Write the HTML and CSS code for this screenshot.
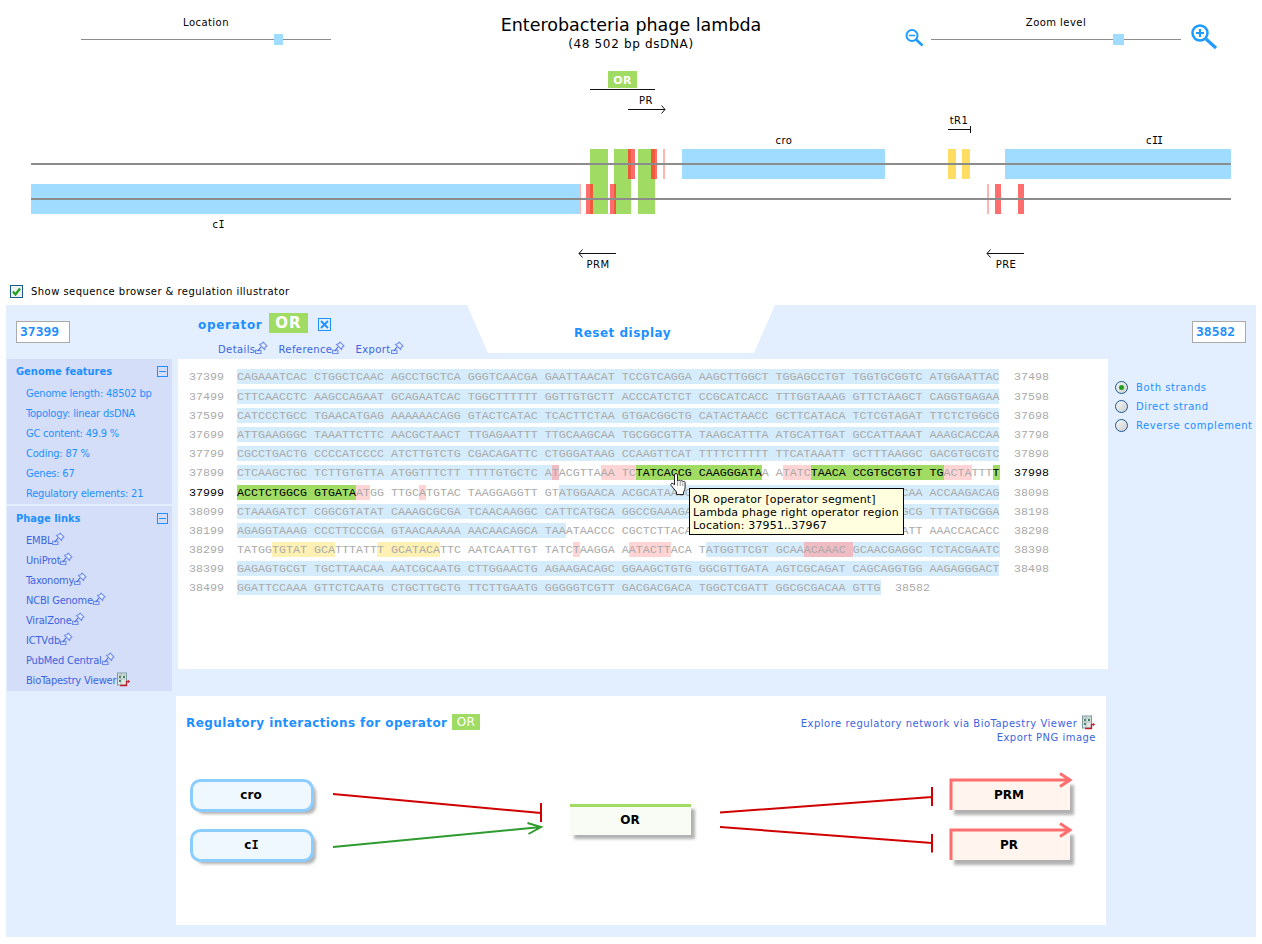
FILE: index.html
```html
<!DOCTYPE html>
<html lang="en">
<head>
<meta charset="utf-8">
<title>Enterobacteria phage lambda</title>
<link rel="stylesheet" href="styles.css">
</head>
<body>
<svg class="defs" width="0" height="0" aria-hidden="true">
  <symbol id="pin" viewBox="0 0 12 12">
    <path d="M7.500 1 11 4.500 9.600 5.500 8.800 7.800 4.200 3.200 6.500 2.400Z" fill="#e8eeff" stroke="#6f8ce8" stroke-width="1"/>
    <path d="M.5 8.500h5v3h-5z" fill="none" stroke="#6f8ce8" stroke-width="1"/>
    <path d="M5.500 5.500 2.500 9.500" stroke="#3c64e0" stroke-width="1"/>
  </symbol>
  <symbol id="bio" viewBox="0 0 15 15">
    <rect x="1.500" y="1" width="9" height="12" fill="#dfe8e4" stroke="#7d9aa0"/>
    <path d="M3 4h2v2H3zM7 4h2v2H7zM3 8h2v2H3z" fill="#3f7f5f"/>
    <path d="M2 3h8M2 7h8M5 1v11" stroke="#93a6a8" stroke-width=".6"/>
    <path d="M4 13.500h6.500V9.500h3" fill="none" stroke="#c0202c" stroke-width="1.400"/>
    <path d="M12 8l2 1.500-2 1.500z" fill="#c0202c"/>
  </symbol>
</svg>

<header class="top">
  <div class="top-left">
    <div class="slider">
      <div class="slider-label">Location</div>
      <div class="track"><span class="thumb thumb-loc"></span></div>
    </div>
  </div>
  <div class="title-block">
    <h1 class="title">Enterobacteria phage lambda</h1>
    <div class="subtitle">(48 502 bp dsDNA)</div>
  </div>
  <div class="top-right">
    <svg class="zoom-minus" width="20" height="20" viewBox="0 0 20 20"><circle cx="8" cy="7.500" r="5.500" fill="none" stroke="#1e9bff" stroke-width="2"/><path d="M5 7.500h6" stroke="#1e9bff" stroke-width="1.500"/><path d="M12 11.500 18.500 17.500" stroke="#1e9bff" stroke-width="2.600"/></svg>
    <div class="slider">
      <div class="slider-label">Zoom level</div>
      <div class="track"><span class="thumb thumb-zoom"></span></div>
    </div>
    <svg class="zoom-plus" width="26" height="26" viewBox="0 0 26 26"><circle cx="9" cy="9" r="7.500" fill="none" stroke="#1e9bff" stroke-width="2.500"/><path d="M5 9h8M9 5v8" stroke="#1e9bff" stroke-width="2.200"/><path d="M15 15 25 24" stroke="#1e9bff" stroke-width="3.200"/></svg>
  </div>
</header>

<svg class="map" width="1262" height="208" viewBox="0 70 1262 208">
  <rect class="coding" x="31" y="184" width="549" height="30"/>
  <rect class="coding" x="682" y="149" width="203" height="30"/>
  <rect class="coding" x="1005" y="149" width="226" height="30"/>
  <rect class="op" x="590" y="149" width="18" height="65"/>
  <rect class="op" x="614" y="149" width="17" height="65"/>
  <rect class="op" x="638" y="149" width="17" height="65"/>
  <rect class="term" x="948" y="149" width="8" height="30"/>
  <rect class="term" x="962" y="149" width="8" height="30"/>
  <rect class="red" x="631" y="149" width="4" height="30"/>
  <rect class="red-dark" x="628" y="149" width="3" height="30"/>
  <rect class="red-dark" x="651" y="149" width="4" height="30"/>
  <rect class="red" x="655" y="149" width="2" height="30"/>
  <rect class="red-pale" x="663" y="149" width="2" height="30"/>
  <rect class="red-pale" x="580" y="184" width="1" height="30"/>
  <rect class="red" x="586" y="184" width="4" height="30"/>
  <rect class="red-dark" x="590" y="184" width="3" height="30"/>
  <rect class="red" x="610" y="184" width="4" height="30"/>
  <rect class="red-dark" x="614" y="184" width="2" height="30"/>
  <rect class="red-pale" x="987" y="184" width="2" height="30"/>
  <rect class="red" x="995" y="184" width="6" height="30"/>
  <rect class="red" x="1018" y="184" width="6" height="30"/>
  <rect class="strand" x="31" y="163" width="1200" height="2"/>
  <rect class="strand" x="31" y="198" width="1200" height="2"/>
  <rect class="op" x="608" y="71" width="29" height="17"/>
  <text class="map-badge" x="622.500" y="84">OR</text>
  <path class="ink" d="M590 89.500h65M628 109.500h37M661.500 105.500l3.500 4-3.500 4M948 129.500h22M970.500 126v7M579 253.500h37M582.500 249.500l-3.500 4 3.500 4M987 253.500h37M990.500 249.500l-3.500 4 3.500 4"/>
  <text class="map-label" x="646" y="104">PR</text>
  <text class="map-label" x="784" y="144">cro</text>
  <text class="map-label" x="959" y="124">tR1</text>
  <text class="map-label" x="1154" y="144">c<tspan class="serif-i">II</tspan></text>
  <text class="map-label" x="218" y="228">c<tspan class="serif-i">I</tspan></text>
  <text class="map-label" x="598" y="268">PRM</text>
  <text class="map-label" x="1006" y="268">PRE</text>
</svg>

<label class="show-row">
  <span class="check"><svg width="9" height="9" viewBox="0 0 9 9"><path d="M1 4.500 3.500 7.500 8 1.500" fill="none" stroke="#1fa01f" stroke-width="2.200"/></svg></span>
  <span class="show-text">Show sequence browser &amp; regulation illustrator</span>
</label>

<main class="main">
  <div class="main-head">
    <div class="head-left"><div class="pos-box">37399</div></div>
    <div class="head-info">
      <div class="op-line">
        <span class="op-name">operator</span>
        <span class="op-badge">OR</span>
        <span class="close-box"><svg width="9" height="9" viewBox="0 0 9 9"><path d="M1 1l7 7M8 1 1 8" stroke="#1e90ff" stroke-width="1.800"/></svg></span>
      </div>
      <div class="op-links">
        <a class="link">Details<svg class="pin"><use href="#pin"/></svg></a>
        <a class="link">Reference<svg class="pin"><use href="#pin"/></svg></a>
        <a class="link">Export<svg class="pin"><use href="#pin"/></svg></a>
      </div>
    </div>
    <div class="reset-tab">Reset display</div>
    <div class="head-right"><div class="pos-box">38582</div></div>
  </div>

  <div class="main-body">
    <aside class="side">
      <section class="side-box">
        <div class="side-head"><span>Genome features</span><span class="minus"></span></div>
        <div class="side-item">Genome length: 48502 bp</div>
        <div class="side-item">Topology: linear dsDNA</div>
        <div class="side-item">GC content: 49.9 %</div>
        <div class="side-item">Coding: 87 %</div>
        <div class="side-item">Genes: 67</div>
        <div class="side-item">Regulatory elements: 21</div>
      </section>
      <section class="side-box">
        <div class="side-head"><span>Phage links</span><span class="minus"></span></div>
        <div class="side-item is-link">EMBL<svg class="pin"><use href="#pin"/></svg></div>
        <div class="side-item is-link">UniProt<svg class="pin"><use href="#pin"/></svg></div>
        <div class="side-item is-link">Taxonomy<svg class="pin"><use href="#pin"/></svg></div>
        <div class="side-item is-link">NCBI Genome<svg class="pin"><use href="#pin"/></svg></div>
        <div class="side-item is-link">ViralZone<svg class="pin"><use href="#pin"/></svg></div>
        <div class="side-item is-link">ICTVdb<svg class="pin"><use href="#pin"/></svg></div>
        <div class="side-item is-link">PubMed Central<svg class="pin"><use href="#pin"/></svg></div>
        <div class="side-item is-link">BioTapestry Viewer<svg class="bio"><use href="#bio"/></svg></div>
      </section>
    </aside>

    <div class="center">
      <section class="seq-panel">
        <div class="row"><span class="num">37399</span><span class="seq"><span class="b">CAGAAATCAC CTGGCTCAAC AGCCTGCTCA GGGTCAACGA GAATTAACAT TCCGTCAGGA AAGCTTGGCT TGGAGCCTGT TGGTGCGGTC ATGGAATTAC</span></span><span class="num">37498</span></div>
        <div class="row"><span class="num">37499</span><span class="seq"><span class="b">CTTCAACCTC AAGCCAGAAT GCAGAATCAC TGGCTTTTTT GGTTGTGCTT ACCCATCTCT CCGCATCACC TTTGGTAAAG GTTCTAAGCT CAGGTGAGAA</span></span><span class="num">37598</span></div>
        <div class="row"><span class="num">37599</span><span class="seq"><span class="b">CATCCCTGCC TGAACATGAG AAAAAACAGG GTACTCATAC TCACTTCTAA GTGACGGCTG CATACTAACC GCTTCATACA TCTCGTAGAT TTCTCTGGCG</span></span><span class="num">37698</span></div>
        <div class="row"><span class="num">37699</span><span class="seq"><span class="b">ATTGAAGGGC TAAATTCTTC AACGCTAACT TTGAGAATTT TTGCAAGCAA TGCGGCGTTA TAAGCATTTA ATGCATTGAT GCCATTAAAT AAAGCACCAA</span></span><span class="num">37798</span></div>
        <div class="row"><span class="num">37799</span><span class="seq"><span class="b">CGCCTGACTG CCCCATCCCC ATCTTGTCTG CGACAGATTC CTGGGATAAG CCAAGTTCAT TTTTCTTTTT TTCATAAATT GCTTTAAGGC GACGTGCGTC</span></span><span class="num">37898</span></div>
        <div class="row"><span class="num">37899</span><span class="seq"><span class="b">CTCAAGCTGC TCTTGTGTTA ATGGTTTCTT TTTTGTGCTC A</span><span class="pb">T</span><span>ACGTTA</span><span class="p">AA TC</span><span class="g">TATCACCG CAAGGGATA</span><span>A A</span><span class="p">TATC</span><span class="g">TAACA CCGTGCGTGT TG</span><span class="p">ACTA</span><span>TTT</span><span class="g">T</span></span><span class="num is-active">37998</span></div>
        <div class="row"><span class="num is-active">37999</span><span class="seq"><span class="g">ACCTCTGGCG GTGATA</span><span class="p">AT</span><span>GG TTGC</span><span class="p">A</span><span>TGTAC TAAGGAGGTT GT</span><span class="b">ATGGAACA ACGCATAACC CTGAAAGATT ATGCAATGCG CTTTGGGCAA ACCAAGACAG</span></span><span class="num">38098</span></div>
        <div class="row"><span class="num">38099</span><span class="seq"><span class="b">CTAAAGATCT CGGCGTATAT CAAAGCGCGA TCAACAAGGC CATTCATGCA GGCCGAAAGA TTTTTTTAAC TATAAACGCT GATGGAAGCG TTTATGCGGA</span></span><span class="num">38198</span></div>
        <div class="row"><span class="num">38199</span><span class="seq"><span class="b">AGAGGTAAAG CCCTTCCCGA GTAACAAAAA AACAACAGCA TAA</span><span>ATAACCC CGCTCTTACA CATTCCAGCC CTGAAAAAGG GCATCAAATT AAACCACACC</span></span><span class="num">38298</span></div>
        <div class="row"><span class="num">38299</span><span class="seq"><span>TATGG</span><span class="y">TGTAT GCA</span><span>TTTATT</span><span class="y">T GCATACA</span><span>TTC AATCAATTGT TATC</span><span class="p">T</span><span>AAGGA A</span><span class="p">ATACTT</span><span>ACA T</span><span class="b">ATGGTTCGT GCAA</span><span class="pb">ACAAAC </span><span class="b">GCAACGAGGC TCTACGAATC</span></span><span class="num">38398</span></div>
        <div class="row"><span class="num">38399</span><span class="seq"><span class="b">GAGAGTGCGT TGCTTAACAA AATCGCAATG CTTGGAACTG AGAAGACAGC GGAAGCTGTG GGCGTTGATA AGTCGCAGAT CAGCAGGTGG AAGAGGGACT</span></span><span class="num">38498</span></div>
        <div class="row"><span class="num">38499</span><span class="seq"><span class="b">GGATTCCAAA GTTCTCAATG CTGCTTGCTG TTCTTGAATG GGGGGTCGTT GACGACGACA TGGCTCGATT GGCGCGACAA GTTG</span></span><span class="num num-end">38582</span></div>

        <svg class="hand" width="16" height="22" viewBox="0 0 16 22"><path d="M4.500 2a1.500 1.500 0 0 1 3 0V8h.8a1.300 1.300 0 0 1 2.400.3 1.300 1.300 0 0 1 2.400.4 1.200 1.200 0 0 1 2 .8V14q0 3-1.500 5v2.500H6.500V19L1.200 12.500q-1-1.500.5-2.200 1-.3 2.800 1.500Z" fill="#fff" stroke="#222"/><path d="M7.500 9v4M10.200 9v4M12.800 9.500V13" stroke="#999"/></svg>
        <div class="tooltip">OR operator [operator segment]<br>Lambda phage right operator region<br>Location: 37951..37967</div>
      </section>

      <section class="reg-panel">
        <div class="reg-head">
          <h2 class="reg-title">Regulatory interactions for operator <span class="reg-badge">OR</span></h2>
          <div class="reg-links">
            <a class="link">Explore regulatory network via BioTapestry Viewer <svg class="bio"><use href="#bio"/></svg></a>
            <a class="link">Export PNG image</a>
          </div>
        </div>
        <svg class="diagram" width="930" height="180" viewBox="176 745 930 180">
          <defs><filter id="soft" x="-10%" y="-20%" width="120%" height="140%"><feGaussianBlur stdDeviation="1.500"/></filter></defs>
          <rect class="shadow" x="196" y="785" width="120" height="29" rx="8"/>
          <rect class="shadow" x="196" y="835" width="120" height="29" rx="8"/>
          <rect class="shadow" x="574" y="809" width="121" height="30"/>
          <rect class="shadow" x="954" y="785" width="120" height="30"/>
          <rect class="shadow" x="954" y="835" width="120" height="30"/>
          <rect class="prot" x="191.500" y="780.500" width="121" height="30" rx="9"/>
          <rect class="prot" x="191.500" y="830.500" width="121" height="30" rx="9"/>
          <rect class="op-node" x="570" y="805" width="121" height="30"/>
          <rect class="op-top" x="570" y="804" width="121" height="3"/>
          <rect class="prom" x="950" y="780" width="120" height="30"/>
          <rect class="prom" x="950" y="830" width="120" height="30"/>
          <path class="prom-line" d="M951 810V780H1070M1060 773.500l10 6.500-10 6.500"/>
          <path class="prom-line" d="M951 860V830H1070M1060 823.500l10 6.500-10 6.500"/>
          <path class="repress" d="M333 794 541 813M541 803v19M720 812.500 932 797M932 787v19M720 827 932 843M932 834v18.500"/>
          <path class="activate" d="M333 847 541 827M527.500 823 541 827 528.500 834"/>
          <text class="node-label" x="251" y="799">cro</text>
          <text class="node-label" x="251" y="849">c<tspan class="serif-i">I</tspan></text>
          <text class="node-label" x="630" y="824">OR</text>
          <text class="node-label" x="1009" y="799">PRM</text>
          <text class="node-label" x="1009" y="849">PR</text>
        </svg>
      </section>
    </div>

    <div class="opts">
      <div class="opt"><span class="radio is-on"></span>Both strands</div>
      <div class="opt"><span class="radio"></span>Direct strand</div>
      <div class="opt"><span class="radio"></span>Reverse complement</div>
    </div>
  </div>
</main>
</body>
</html>
```

FILE: styles.css
```css
* { box-sizing: border-box; }
html, body { margin: 0; padding: 0; }
body {
  width: 1262px;
  height: 944px;
  overflow: hidden;
  background: #fff;
  color: #000;
  font-family: "DejaVu Sans", Verdana, sans-serif;
  font-size: 10px;
  letter-spacing: .45px;
}
.defs { position: absolute; }

/* top bar */
.top { display: grid; grid-template-columns: 1fr auto 1fr; height: 70px; }
.top-left { padding-left: 81px; padding-top: 16px; }
.top-right { display: flex; justify-content: flex-end; align-items: flex-start; padding: 16px 45px 0 0; }
.slider { width: 250px; }
.slider-label { text-align: center; line-height: 13px; height: 23px; }
.track { position: relative; height: 1px; background: #8c8c8c; }
.thumb { position: absolute; top: -5px; width: 9px; height: 11px; background: #a0dcff; }
.thumb-loc { left: 193px; }
.thumb-zoom { left: 182px; width: 11px; }
.zoom-minus { margin: 12px 7px 0 0; }
.zoom-plus { margin: 8px 0 0 10px; }
.title-block { text-align: center; padding-top: 15px; }
.title { margin: 0; font-size: 17.5px; font-weight: 400; line-height: 21px; letter-spacing: 0; }
.subtitle { font-size: 12px; line-height: 17px; letter-spacing: .65px; }

/* genome map */
.map { display: block; }
.coding { fill: #a0dcff; }
.op { fill: #a0dc64; }
.term { fill: #ffdc64; }
.red { fill: #ff6e6e; }
.red-dark { fill: #ee5a3c; }
.red-pale { fill: #ffb4b4; }
.strand { fill: #8c8c8c; }
.ink { fill: none; stroke: #111; stroke-width: 1; }
.map-label { font-size: 10px; text-anchor: middle; }
.map-badge { font-size: 11px; font-weight: 700; fill: #fff; text-anchor: middle; }
.serif-i { font-family: "DejaVu Sans Mono", monospace; letter-spacing: -1px; }

.show-row { display: flex; align-items: center; gap: 8px; height: 14px; margin: 6px 0 0 10px; line-height: 14px; }
.show-text { padding-top: 2px; }
.check { display: flex; align-items: center; justify-content: center; width: 13px; height: 13px; border: 1px solid #1c5a8c; background: #eef2ee; }

/* main panel */
.main { margin: 7px 0 0 6px; width: 1250px; height: 632px; background: #e3eeff; }
.main-head { display: grid; grid-template-columns: 192px 269px 308px 1fr; height: 54px; }
.head-left { padding: 16px 0 0 10px; }
.head-right { display: flex; justify-content: flex-end; padding: 16px 10px 0 0; }
.head-right .pos-box { align-self: flex-start; }
.pos-box { width: 54px; height: 22px; border: 1px solid #aaa; background: #fff; padding-left: 3px; color: #1e90ff; font: 700 13px/20px "DejaVu Sans Mono", monospace; letter-spacing: 0; }
.op-line { display: flex; align-items: center; height: 20px; margin-top: 8px; }
.op-name { color: #1e90ff; font-size: 12px; font-weight: 700; width: 71px; padding-top: 3px; letter-spacing: .7px; }
.op-badge { width: 39px; height: 20px; background: #a0dc64; color: #fff; font-size: 15px; font-weight: 700; line-height: 20px; text-align: center; letter-spacing: 1px; }
.close-box { display: flex; align-items: center; justify-content: center; width: 13px; height: 13px; margin: 3px 0 0 10px; border: 1px solid #1e90ff; }
.op-links { display: flex; gap: 11px; margin: 8px 0 0 20px; line-height: 14px; }
.link { color: #3c64e0; white-space: nowrap; }
.op-links .link { letter-spacing: .4px; }
.reg-links .link { letter-spacing: .49px; }
.pin { width: 13px; height: 13px; margin-right: -1px; vertical-align: -1px; }
.bio { width: 15px; height: 15px; vertical-align: -3px; }
.reset-tab { height: 48px; padding-left: 3px; background: #fff; clip-path: polygon(0 0, 100% 0, 287px 100%, 21px 100%); color: #1e90ff; font-size: 12px; font-weight: 700; line-height: 57px; text-align: center; letter-spacing: .5px; }

.main-body { display: flex; align-items: flex-start; }
.side { width: 165px; margin-left: 1px; display: flex; flex-direction: column; gap: 2px; }
.side-box { background: #d4def8; padding-bottom: 1px; }
.side-head { display: flex; justify-content: space-between; align-items: center; height: 24px; padding: 0 4px 0 9px; color: #1e90ff; font-family: "DejaVu Sans Condensed", "DejaVu Sans", sans-serif; font-stretch: condensed; font-size: 11px; font-weight: 700; letter-spacing: 0; }
.minus { position: relative; width: 11px; height: 11px; border: 1px solid #1e90ff; }
.minus::after { content: ""; position: absolute; left: 1px; right: 1px; top: 4px; height: 1px; background: #1e90ff; }
.side-item { padding: 1px 0 0 19px; height: 20px; font-family: "DejaVu Sans Condensed", "DejaVu Sans", sans-serif; font-stretch: condensed; font-size: 11px; line-height: 20px; color: #1e90ff; letter-spacing: -.2px; white-space: nowrap; }
.side-item.is-link { color: #3c64e0; }

.center { width: 930px; margin-left: 6px; }
.seq-panel { position: relative; height: 310px; background: #fff; padding: 10.4px 0 0 11px; font-family: "Liberation Mono", "Courier New", monospace; font-size: 11.67px; letter-spacing: 0; color: #aaa; }
.row { display: flex; height: 19.2px; }
.num { width: 48px; line-height: 16px; }
.num.is-active { color: #000; }
.num-end { position: absolute; left: 717px; }
.seq { width: 777px; white-space: pre; line-height: 16px; flex: none; }
.seq span { display: inline-block; height: 15px; vertical-align: top; }
.seq .b { background: #d4ecfc; }
.seq .p { background: #ffd4d4; }
.seq .pb { background: #f0bcc4; }
.seq .y { background: #fff0b4; }
.seq .g { background: #a0dc64; color: #000; }
.hand { position: absolute; left: 492px; top: 114px; }
.tooltip { position: absolute; left: 511px; top: 129px; width: 215px; height: 47px; padding: 4px 0 0 3px; border: 1px solid #000; background: #ffffe0; color: #000; font: 11px/13px "DejaVu Sans", sans-serif; letter-spacing: .15px; white-space: nowrap; }

.reg-panel { width: 930px; height: 229px; margin: 27px 0 0 -2px; background: #fff; }
.reg-head { display: flex; justify-content: space-between; height: 49px; padding: 18px 10px 0; }
.reg-title { display: flex; align-items: center; margin: 1px 0 0; height: 16px; color: #1e90ff; font-size: 12px; font-weight: 700; letter-spacing: .41px; white-space: pre; }
.reg-badge { width: 28px; height: 16px; margin-top: -2px; background: #a0dc64; color: #fff; font-size: 12px; font-weight: 400; line-height: 16px; text-align: center; }
.reg-links { display: flex; flex-direction: column; align-items: flex-end; line-height: 14px; margin-top: 1px; }
.diagram { display: block; }
.shadow { fill: #888; opacity: .65; filter: url(#soft); }
.prot { fill: #f0f8ff; stroke: #8ccdff; stroke-width: 3; }
.op-node { fill: #f8fcf4; }
.op-top { fill: #a0dc64; }
.prom { fill: #fff4ee; }
.prom-line { fill: none; stroke: #ff6e6e; stroke-width: 3; }
.repress { fill: none; stroke: #d00000; stroke-width: 2; }
.activate { fill: none; stroke: #2e9b2e; stroke-width: 2; }
.node-label { font-size: 12px; font-weight: 700; text-anchor: middle; letter-spacing: 0; }

.opts { margin: 22px 0 0 7px; display: flex; flex-direction: column; gap: 6px; }
.opt { display: flex; align-items: center; gap: 8px; height: 13px; color: #1e90ff; letter-spacing: .58px; white-space: nowrap; }
.radio { position: relative; flex: none; width: 13px; height: 13px; border: 1px solid #1c5a8c; border-radius: 50%; background: linear-gradient(135deg, #f6f6f6, #cfcfcf); }
.radio.is-on::after { content: ""; position: absolute; left: 3px; top: 3px; width: 5px; height: 5px; border-radius: 50%; background: #1fa01f; }
```
